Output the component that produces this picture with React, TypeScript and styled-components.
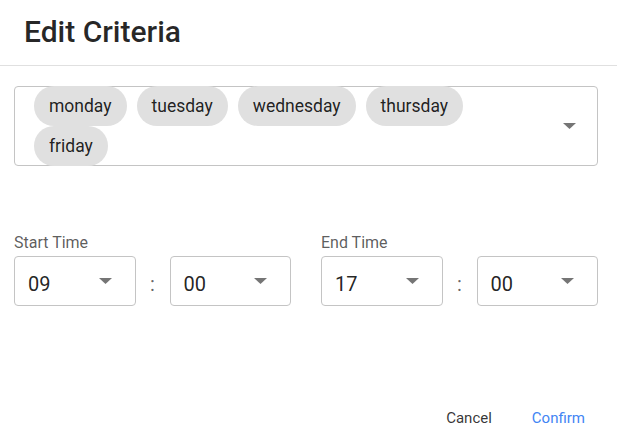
import React from "react";
import styled, { createGlobalStyle } from "styled-components";

const GlobalStyle = createGlobalStyle`
  body {
    margin: 0;
    background: #ffffff;
    font-family: Roboto, "Liberation Sans", sans-serif;
  }
`;

const Dialog = styled.div`
  width: 617px;
  height: 445px;
  background: #ffffff;
  overflow: hidden;
`;

const Title = styled.h2`
  margin: 0;
  padding: 14px 24px 15px;
  font-size: 30px;
  line-height: 36px;
  font-weight: 500;
  color: rgba(0, 0, 0, 0.85);
  border-bottom: 1px solid #e0e0e0;
`;

const Content = styled.div`
  padding: 20px 19px 0 14px;
`;

const MultiSelect = styled.div`
  box-sizing: border-box;
  display: flex;
  align-items: center;
  min-height: 80px;
  padding: 0 21px 0 19px;
  border: 1px solid #c4c4c4;
  border-radius: 4px;
`;

const ChipList = styled.div`
  flex: 1;
  display: flex;
  flex-wrap: wrap;
  column-gap: 10px;
  margin: -1px 40px -1px 0;
`;

const Chip = styled.span`
  display: inline-flex;
  align-items: center;
  height: 40px;
  padding: 0 15px;
  border-radius: 20px;
  background: #e0e0e0;
  font-size: 17.5px;
  color: rgba(0, 0, 0, 0.87);
`;

const TimeGrid = styled.div`
  display: grid;
  grid-template-columns: 1fr 1fr;
  column-gap: 30px;
  margin-top: 67px;
`;

const Label = styled.div`
  font-size: 16px;
  line-height: 19px;
  color: rgba(0, 0, 0, 0.65);
  margin-bottom: 4px;
`;

const TimeRow = styled.div`
  display: grid;
  grid-template-columns: 1fr 34px 1fr;
  align-items: center;
`;

const TimeSelect = styled.div`
  box-sizing: border-box;
  height: 50px;
  display: flex;
  align-items: center;
  justify-content: space-between;
  padding: 0 23px 0 13px;
  border: 1px solid #c4c4c4;
  border-radius: 4px;
`;

const Value = styled.span`
  padding-top: 6px;
  font-size: 20px;
  line-height: 23px;
  color: rgba(0, 0, 0, 0.87);
`;

const Colon = styled.span`
  text-align: center;
  padding-top: 6px;
  font-size: 20px;
  line-height: 23px;
  color: rgba(0, 0, 0, 0.6);
`;

const Footer = styled.div`
  display: flex;
  justify-content: flex-end;
  gap: 24px;
  margin-top: 94px;
  padding-right: 24px;
`;

const Button = styled.button<{ $primary?: boolean }>`
  background: none;
  border: none;
  padding: 6px 8px;
  font-family: Roboto, "Liberation Sans", sans-serif;
  font-size: 15px;
  line-height: 24px;
  color: ${(p) => (p.$primary ? "#4285f4" : "rgba(0, 0, 0, 0.8)")};
  cursor: pointer;
`;

const Arrow = () => (
  <svg width="13" height="6" viewBox="0 0 13 6">
    <path d="M0 0 L13 0 L6.5 6 Z" fill="rgba(0,0,0,0.54)" />
  </svg>
);

const days = ["monday", "tuesday", "wednesday", "thursday", "friday"];

const TimePicker = ({ label, hour, minute }: { label: string; hour: string; minute: string }) => (
  <div>
    <Label>{label}</Label>
    <TimeRow>
      <TimeSelect>
        <Value>{hour}</Value>
        <Arrow />
      </TimeSelect>
      <Colon>:</Colon>
      <TimeSelect>
        <Value>{minute}</Value>
        <Arrow />
      </TimeSelect>
    </TimeRow>
  </div>
);

const App = () => {
  return (
    <>
      <GlobalStyle />
      <Dialog>
        <Title>Edit Criteria</Title>
        <Content>
          <MultiSelect>
            <ChipList>
              {days.map((d) => (
                <Chip key={d}>{d}</Chip>
              ))}
            </ChipList>
            <Arrow />
          </MultiSelect>
          <TimeGrid>
            <TimePicker label="Start Time" hour="09" minute="00" />
            <TimePicker label="End Time" hour="17" minute="00" />
          </TimeGrid>
        </Content>
        <Footer>
          <Button>Cancel</Button>
          <Button $primary>Confirm</Button>
        </Footer>
      </Dialog>
    </>
  );
};

export default App;
